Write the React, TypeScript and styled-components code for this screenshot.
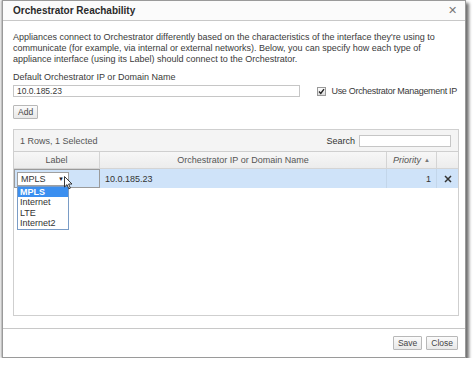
import React from "react"
import styled, { createGlobalStyle } from "styled-components"

const Global = createGlobalStyle`
  html, body { margin: 0; padding: 0; background: #fff; }
  body { font-family: "Liberation Sans", sans-serif; }
`

const Dialog = styled.div`
  box-sizing: border-box;
  margin: 0 0 0 2px;
  width: 464px;
  height: 358px;
  background: #fff;
  border: 1px solid #9a9a9a;
  box-shadow: 3px 3px 3px rgba(0, 0, 0, 0.55), -1px 0 2px rgba(0, 0, 0, 0.35);
  display: flex;
  flex-direction: column;
  font-family: "Liberation Sans", sans-serif;
  font-size: 9px;
  color: #3a3a3a;
`

const TitleBar = styled.div`
  height: 19px;
  flex: none;
  display: flex;
  align-items: center;
  justify-content: space-between;
  padding: 0 8px 0 10px;
  border-bottom: 1px solid #c8c8c8;
  background: #fbfbfb;
`

const Title = styled.span`
  font-weight: bold;
  font-size: 10px;
  color: #2a2a2a;
`

const CloseX = styled.span`
  font-size: 11px;
  color: #777;
`

const Body = styled.div`
  flex: 1;
  display: flex;
  flex-direction: column;
  padding: 11px 8px 0 10px;
`

const Description = styled.p`
  margin: 0;
  line-height: 11px;
`

const FieldLabel = styled.div`
  margin-top: 7px;
  line-height: 11px;
`

const FieldRow = styled.div`
  display: flex;
  align-items: center;
  margin-top: 2px;
`

const TextInput = styled.div<{ $w: number }>`
  box-sizing: border-box;
  width: ${({ $w }) => $w}px;
  height: 12px;
  border: 1px solid #c6c6c6;
  padding: 0 3px;
  line-height: 10px;
  font-size: 8.5px;
  background: #fff;
`

const CheckLabel = styled.label`
  display: flex;
  align-items: center;
  gap: 5px;
  margin-left: 17px;
  white-space: nowrap;
  letter-spacing: -0.3px;
`

const CheckBox = styled.span`
  box-sizing: border-box;
  flex: none;
  width: 9px;
  height: 9px;
  border: 1px solid #999;
  background: linear-gradient(#fdfdfd, #dcdcdc);
  display: flex;
  align-items: center;
  justify-content: center;
`

const Button = styled.button`
  box-sizing: border-box;
  height: 14px;
  padding: 0 4px;
  border: 1px solid #b8b8b8;
  border-radius: 1px;
  background: linear-gradient(#fbfbfb, #e8e8e8);
  font-family: "Liberation Sans", sans-serif;
  font-size: 8.5px;
  color: #444;
  line-height: 12px;
`

const AddRow = styled.div`
  margin-top: 8px;
`

const Grid = styled.div`
  box-sizing: border-box;
  margin-top: 10px;
  width: 446px;
  height: 187px;
  border: 1px solid #cfcfcf;
  display: flex;
  flex-direction: column;
`

const GridToolbar = styled.div`
  height: 21px;
  flex: none;
  display: flex;
  align-items: center;
  justify-content: space-between;
  padding: 0 7px 0 6px;
  background: #f4f4f4;
  border-bottom: 1px solid #cfcfcf;
  color: #555;
`

const SearchWrap = styled.div`
  display: flex;
  align-items: center;
  gap: 4px;
  color: #333;
`

const HeaderRow = styled.div`
  height: 16px;
  flex: none;
  display: grid;
  grid-template-columns: 86px 287px 50px 1fr;
  background: linear-gradient(#f7f7f7, #ececec);
  border-bottom: 1px solid #d4d4d4;
  color: #555;
`

const HeaderCell = styled.div<{ $italic?: boolean; $align?: string }>`
  display: flex;
  align-items: center;
  justify-content: ${({ $align }) => $align || "center"};
  padding: 0 6px;
  border-right: 1px solid #d4d4d4;
  font-style: ${({ $italic }) => ($italic ? "italic" : "normal")};
  &:last-child { border-right: none; }
`

const SortArrow = styled.span`
  font-size: 6px;
  font-style: normal;
  margin-left: 3px;
  color: #777;
`

const DataRow = styled.div`
  height: 19px;
  flex: none;
  display: grid;
  grid-template-columns: 86px 287px 50px 1fr;
  background: #cfe3f9;
`

const DataCell = styled.div<{ $align?: string }>`
  display: flex;
  align-items: center;
  justify-content: ${({ $align }) => $align || "flex-start"};
  padding: 0 5px;
  border-right: 1px solid #c3d6ea;
  color: #333;
  &:last-child { border-right: none; }
`

const EditCell = styled.div`
  display: flex;
  align-items: center;
  padding: 0 0 0 2px;
  border: 1px solid #9a9a9a;
  background: #cfe3f9;
`

const Select = styled.div`
  position: relative;
  box-sizing: border-box;
  width: 52px;
  height: 14px;
  border: 1px solid #a0a0a0;
  background: #fff;
  display: flex;
  align-items: center;
  justify-content: space-between;
  padding: 0 4px 0 3px;
  color: #333;
`

const DropArrow = styled.span`
  font-size: 6px;
  color: #222;
`

const Options = styled.ul`
  position: absolute;
  top: 13px;
  left: -1px;
  width: 50px;
  margin: 0;
  padding: 0;
  list-style: none;
  border: 1px solid #7a9cc6;
  background: #fff;
  z-index: 2;
`

const Option = styled.li<{ $active?: boolean }>`
  height: 10.5px;
  line-height: 10.5px;
  padding: 0 2px;
  background: ${({ $active }) => ($active ? "#3b8ff0" : "#fff")};
  color: ${({ $active }) => ($active ? "#fff" : "#333")};
  font-weight: ${({ $active }) => ($active ? "bold" : "normal")};
`

const Cursor = styled.svg`
  position: absolute;
  left: 46px;
  top: 3px;
  z-index: 3;
`

const Footer = styled.div`
  height: 28px;
  flex: none;
  margin-top: auto;
  border-top: 1px solid #c8c8c8;
  display: flex;
  align-items: center;
  justify-content: flex-end;
  gap: 4px;
  padding: 0 7px 0 0;
`

export default function App() {
  return (
    <>
      <Global />
      <Dialog>
        <TitleBar>
          <Title>Orchestrator Reachability</Title>
          <CloseX>✕</CloseX>
        </TitleBar>
        <Body>
          <Description>
            Appliances connect to Orchestrator differently based on the characteristics of the interface they're using to
            communicate (for example, via internal or external networks). Below, you can specify how each type of appliance
            interface (using its Label) should connect to the Orchestrator.
          </Description>
          <FieldLabel>Default Orchestrator IP or Domain Name</FieldLabel>
          <FieldRow>
            <TextInput $w={293}>10.0.185.23</TextInput>
            <CheckLabel>
              <CheckBox>
                <svg width="7" height="7" viewBox="0 0 7 7">
                  <path d="M1 3.6 L2.8 5.4 L6 1.2" stroke="#222" strokeWidth="1.4" fill="none" />
                </svg>
              </CheckBox>
              Use Orchestrator Management IP
            </CheckLabel>
          </FieldRow>
          <AddRow>
            <Button>Add</Button>
          </AddRow>
          <Grid>
            <GridToolbar>
              <span>1 Rows, 1 Selected</span>
              <SearchWrap>
                Search
                <TextInput $w={92} />
              </SearchWrap>
            </GridToolbar>
            <HeaderRow>
              <HeaderCell>Label</HeaderCell>
              <HeaderCell>Orchestrator IP or Domain Name</HeaderCell>
              <HeaderCell $italic $align="flex-end">
                Priority <SortArrow>▲</SortArrow>
              </HeaderCell>
              <HeaderCell />
            </HeaderRow>
            <DataRow>
              <EditCell>
                <Select>
                  MPLS
                  <DropArrow>▼</DropArrow>
                  <Options>
                    <Option $active>MPLS</Option>
                    <Option>Internet</Option>
                    <Option>LTE</Option>
                    <Option>Internet2</Option>
                  </Options>
                  <Cursor width="9" height="14" viewBox="0 0 9 14">
                    <path d="M0.5 0.5 L0.5 11 L3 8.6 L4.8 12.8 L6.4 12.1 L4.6 8 L8 8 Z" fill="#fff" stroke="#222" strokeWidth="0.9" />
                  </Cursor>
                </Select>
              </EditCell>
              <DataCell>10.0.185.23</DataCell>
              <DataCell $align="flex-end">1</DataCell>
              <DataCell $align="center">
                <svg width="8" height="8" viewBox="0 0 8 8">
                  <path d="M1 1 L7 7 M7 1 L1 7" stroke="#333" strokeWidth="1.5" />
                </svg>
              </DataCell>
            </DataRow>
          </Grid>
        </Body>
        <Footer>
          <Button>Save</Button>
          <Button>Close</Button>
        </Footer>
      </Dialog>
    </>
  )
}
